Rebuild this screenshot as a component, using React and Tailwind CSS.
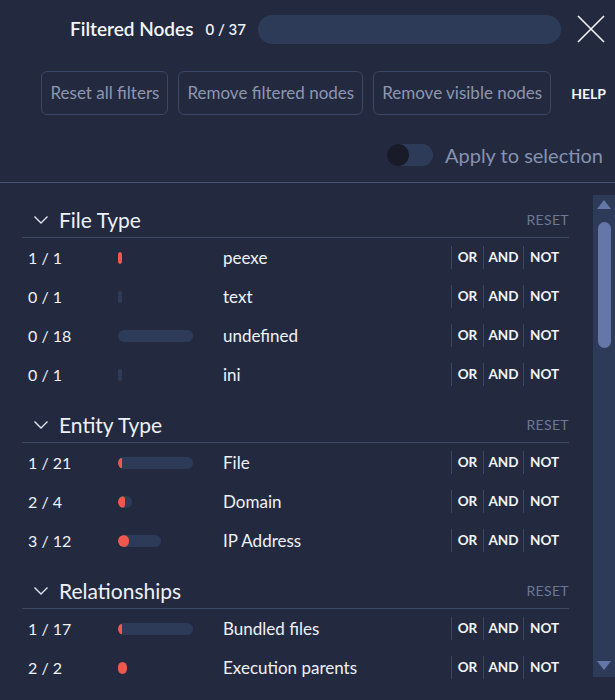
import React from 'react';

const sections = [
  {
    title: 'File Type',
    rows: [
      { label: 'peexe', hit: 1, total: 1 },
      { label: 'text', hit: 0, total: 1 },
      { label: 'undefined', hit: 0, total: 18 },
      { label: 'ini', hit: 0, total: 1 },
    ],
  },
  {
    title: 'Entity Type',
    rows: [
      { label: 'File', hit: 1, total: 21 },
      { label: 'Domain', hit: 2, total: 4 },
      { label: 'IP Address', hit: 3, total: 12 },
    ],
  },
  {
    title: 'Relationships',
    rows: [
      { label: 'Bundled files', hit: 1, total: 17 },
      { label: 'Execution parents', hit: 2, total: 2 },
    ],
  },
];

const BAR_MAX = 75;

const Chevron = () => (
  <svg width="16" height="10" viewBox="0 0 16 10" fill="none" className="shrink-0">
    <path d="M1.5 1.5 L8 8 L14.5 1.5" stroke="#dfe4f0" strokeWidth="1.4" />
  </svg>
);

const FilterRow = ({ row, max }) => {
  const track = (row.total / max) * BAR_MAX;
  const fill = row.total ? (row.hit / row.total) * track : 0;
  return (
    <div className="flex h-[39px] items-center">
      <span className="w-[96px] pl-[6px] text-[16px] text-[#eef1f7]">
        {row.hit} / {row.total}
      </span>
      <div className="w-[105px]">
        <div
          className="relative h-[12px] overflow-hidden rounded-full bg-[#2e3b58]"
          style={{ width: track }}
        >
          <div className="absolute inset-y-0 left-0 rounded-full bg-[#f0574d]" style={{ width: fill }} />
        </div>
      </div>
      <span className="flex-1 text-[17px] text-[#eef1f7]">{row.label}</span>
      <div className="flex h-[23px] items-stretch text-[13.5px] font-bold text-[#f2f4f8]">
        <span className="flex w-[32px] items-center justify-center border-l border-[#3a4666]">OR</span>
        <span className="flex w-[40px] items-center justify-center border-l border-[#3a4666]">AND</span>
        <span className="flex w-[46px] items-center justify-start border-l border-[#3a4666] pl-[6px]">NOT</span>
      </div>
    </div>
  );
};

const Section = ({ section }) => {
  const max = Math.max(...section.rows.map((r) => r.total));
  return (
    <div className="mt-[13px]">
      <div className="flex h-[36px] items-center border-b border-[#3d4867] pl-[11px]">
        <Chevron />
        <span className="ml-[10px] flex-1 text-[21px] text-[#eef1f7]">{section.title}</span>
        <span className="text-[14px] tracking-wide text-[#6d7792]">RESET</span>
      </div>
      {section.rows.map((row) => (
        <FilterRow key={row.label} row={row} max={max} />
      ))}
    </div>
  );
};

export default function App() {
  return (
    <div
      className="flex h-[700px] w-[615px] flex-col overflow-hidden bg-[#232a40]"
      style={{ fontFamily: 'Lato, "Liberation Sans", sans-serif' }}
    >
      <div className="flex h-[58px] shrink-0 items-center pl-[70px] pr-[10px]">
        <span className="text-[19px] font-semibold text-[#f3f5f9]">Filtered Nodes</span>
        <span className="ml-[12px] text-[15px] font-semibold text-[#eef1f7]">0 / 37</span>
        <div className="ml-[12px] h-[29px] flex-1 rounded-full bg-[#2e3b58]" />
        <svg width="28" height="28" viewBox="0 0 28 28" className="ml-[16px]">
          <path d="M1 1 L27 27 M27 1 L1 27" stroke="#f2f4f8" strokeWidth="1.6" />
        </svg>
      </div>

      <div className="mt-[13px] flex h-[44px] shrink-0 items-stretch justify-end gap-[10px] pr-[9px]">
        {['Reset all filters', 'Remove filtered nodes', 'Remove visible nodes'].map((b) => (
          <button
            key={b}
            className="rounded-[6px] border border-[#3a4666] px-[8px] text-[17px] text-[#8d96ae]"
          >
            {b}
          </button>
        ))}
        <span className="ml-[10px] flex items-center text-[14px] font-bold text-[#f2f4f8]">HELP</span>
      </div>

      <div className="mt-[17px] flex h-[45px] shrink-0 items-center justify-end pr-[12px]">
        <div className="relative h-[22px] w-[46px] rounded-full bg-[#2e3b58]">
          <div className="absolute left-0 top-0 h-[22px] w-[22px] rounded-full bg-[#1a1b29]" />
        </div>
        <span className="ml-[12px] text-[20px] text-[#8792ae]">Apply to selection</span>
      </div>

      <div className="mt-[5px] h-[1px] shrink-0 bg-[#45557a]" />

      <div className="flex min-h-0 flex-1">
        <div className="flex-1 overflow-hidden pl-[22px] pr-[24px] pt-[6px]">
          {sections.map((s) => (
            <Section key={s.title} section={s} />
          ))}
        </div>
        <div className="mb-[23px] mt-[12px] flex w-[22px] flex-col items-center bg-[#2e3b58]">
          <svg width="14" height="9" viewBox="0 0 14 9" className="mt-[5px]">
            <path d="M7 0 L14 9 L0 9 Z" fill="#6577a8" />
          </svg>
          <div className="mt-[13px] h-[126px] w-[13px] rounded-full bg-[#6577a8]" />
          <div className="flex-1" />
          <svg width="14" height="9" viewBox="0 0 14 9" className="mb-[7px]">
            <path d="M0 0 L14 0 L7 9 Z" fill="#6577a8" />
          </svg>
        </div>
      </div>
    </div>
  );
}
